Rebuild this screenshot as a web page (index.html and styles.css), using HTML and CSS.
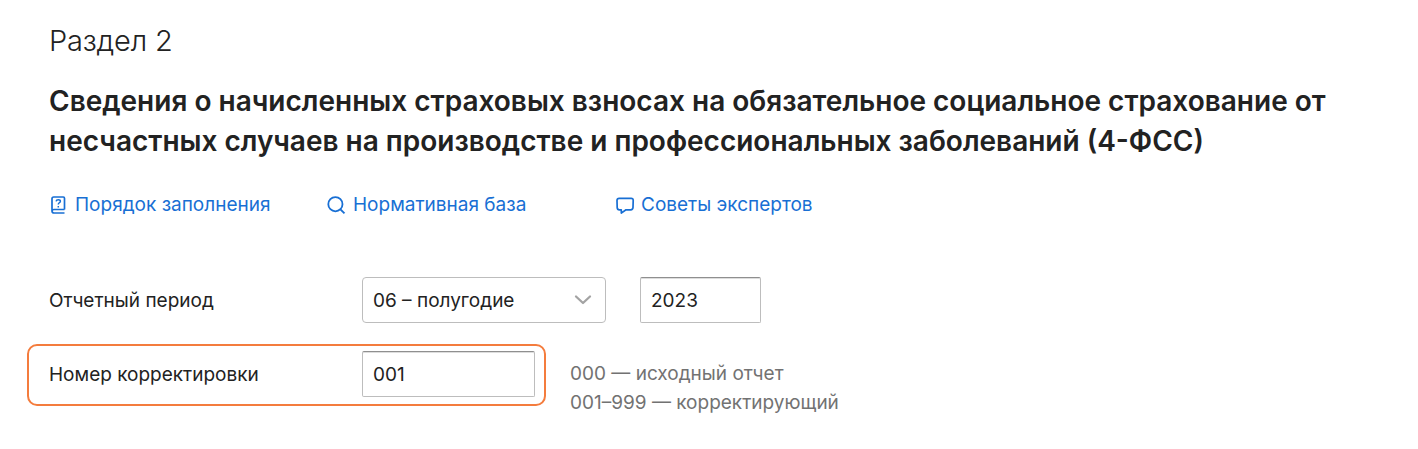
FILE: index.html
```
<!DOCTYPE html>
<html lang="ru">
<head><meta charset="utf-8"><title>4-ФСС</title><link rel="stylesheet" href="styles.css"></head>
<body>
<main class="page">
  <div class="section">Раздел 2</div>
  <h1 class="title"><span class="line-one">Сведения о начисленных страховых взносах на обязательное социальное страхование от</span><br><span class="line-two">несчастных случаев на производстве и профессиональных заболеваний (4-ФСС)</span></h1>
  <nav class="links">
    <a class="link guide"><svg class="icon" width="20" height="22" viewBox="0 0 20 22"><path d="M15.5 15.5V4.2q0-1.2-1.2-1.2H4.7Q3 3 3 4.7v12q0 2.3 2 2.3h10.5M3 17.2q0-1.7 2-1.7h10.5" fill="none" stroke="currentColor" stroke-width="1.7"/><path d="M7.1 7.4q.2-1.7 2.2-1.7 2.1 0 2.1 1.6 0 1-1.2 1.6-.9.5-.9 1.5M9.3 11.9v1.5" fill="none" stroke="currentColor" stroke-width="1.5"/></svg><span class="t-guide">Порядок заполнения</span></a>
    <a class="link base"><svg class="icon" width="20" height="22" viewBox="0 0 20 22"><circle cx="9.4" cy="10.2" r="7.1" fill="none" stroke="currentColor" stroke-width="1.8"/><path d="m14.4 15.3 4.1 4.1" stroke="currentColor" stroke-width="1.9"/></svg><span class="t-base">Нормативная база</span></a>
    <a class="link advice"><svg class="icon" width="20" height="22" viewBox="0 0 20 22"><path d="M4.2 4.4h12q2.1 0 2 2.1l-.2 7q-.1 2.3-2.3 2.3H11l-4.7 3.3v-3.3H4.4q-2.1 0-2.2-2.2L2 6.5q0-2.1 2.2-2.1Z" fill="none" stroke="currentColor" stroke-width="1.7" stroke-linejoin="round"/></svg><span class="t-advice">Советы экспертов</span></a>
  </nav>
  <section class="period">
    <span class="label t-period">Отчетный период</span>
    <div class="field select"><span class="t-half">06 – полугодие</span><svg width="18" height="12" viewBox="0 0 18 12"><path d="m2 2.5 7 6.5 7-6.5" fill="none" stroke="#a3a3a3" stroke-width="2.3" stroke-linecap="round" stroke-linejoin="round"/></svg></div>
    <div class="field inset year">2023</div>
  </section>
  <section class="correction">
    <div class="highlight"><span class="label t-number">Номер корректировки</span><div class="field inset number">001</div></div>
    <div class="hint"><span class="t-hint1">000 — исходный отчет</span><br><span class="t-hint2">001–999 — корректирующий</span></div>
  </section>
</main>
</body></html>
```
FILE: styles.css
```
* { box-sizing: border-box; }
body { margin: 0; background: #fff; color: #222; font: 400 19px/29px Inter, "Open Sans", sans-serif; }
.page { padding: 21px 49px 0; }
.section { font-size: 29px; line-height: 40px; font-weight: 300; letter-spacing: -.2px; }
.title { margin: 20px 0 0; font-size: 28px; line-height: 40px; font-weight: 600; white-space: nowrap; }
.links { display: flex; margin-top: 28px; height: 30px; color: #186fd4; white-space: nowrap; }
.link { display: flex; align-items: center; }
.icon { flex: none; margin-top: 1px; }
.guide { width: 277px; gap: 6px; }
.base { width: 289px; gap: 7px; }
.advice { gap: 6px; }
.base .icon, .advice .icon { margin-right: 0; }
.label { width: 313px; flex: none; }
.field { height: 46px; border: 1px solid #bdbdbd; border-radius: 4px; padding: 0 10px; display: flex; align-items: center; }
.inset { border-top-color: #8f8f8f; border-radius: 2px; box-shadow: inset 0 1px #ddd; }
.period { display: flex; align-items: center; margin-top: 58px; }
.select { width: 244px; justify-content: space-between; padding-right: 13px; }
.year { width: 121px; margin-left: 34px; }
.correction { display: flex; margin: 21px 0 0 -22px; }
.highlight { width: 519px; height: 62px; border: 2px solid #f47c3d; border-radius: 10px; padding: 0 9px 2px 20px; display: flex; align-items: center; }
.number { width: 174px; }
.hint { margin: 15px 0 0 24px; color: #727272; white-space: nowrap; }
```
